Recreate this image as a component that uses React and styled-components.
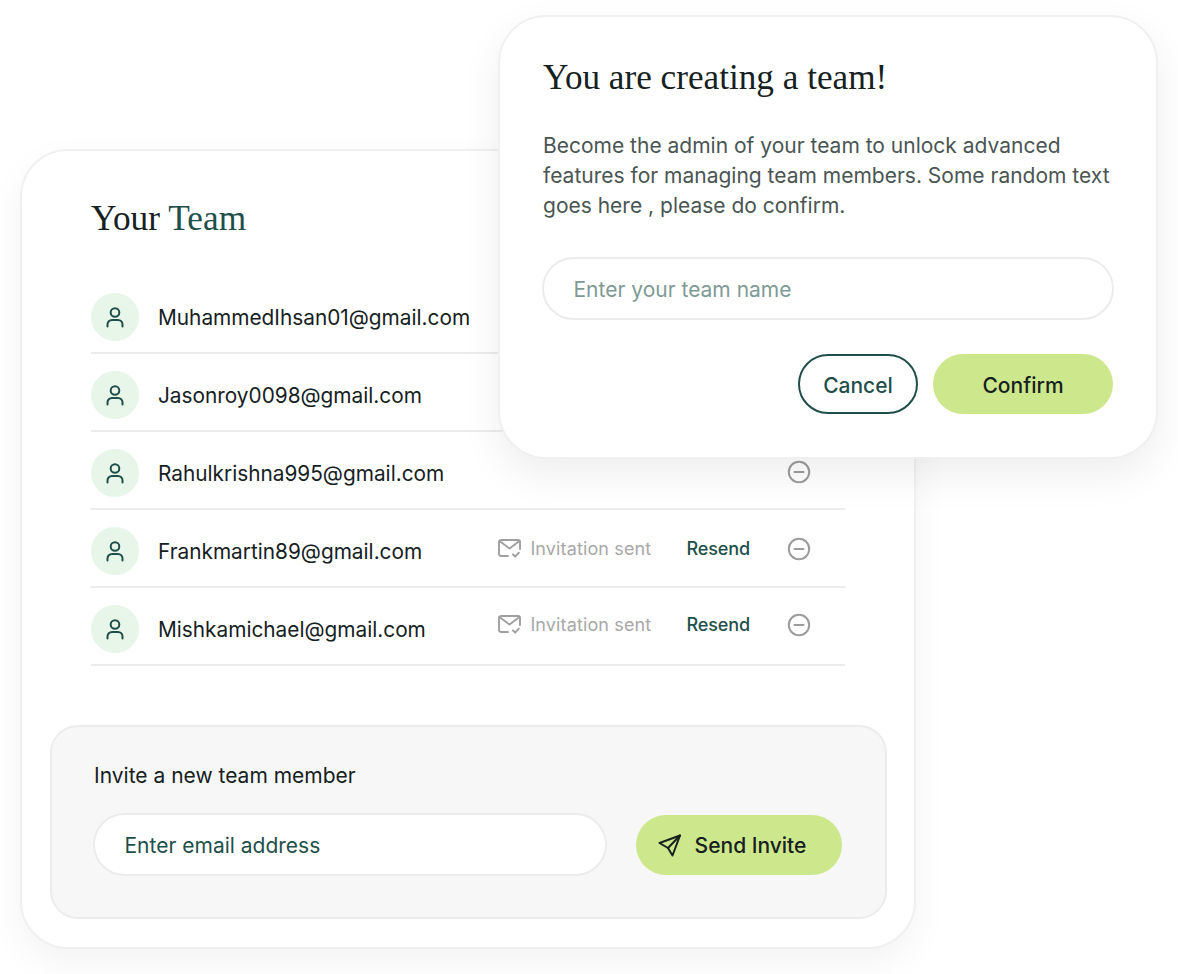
import React from 'react'
import styled, { createGlobalStyle } from 'styled-components'

const dark = '#16211f'
const green = '#1f4f4a'
const lime = '#cde88c'
const line = '#ececec'

const GlobalStyle = createGlobalStyle`
  html, body {
    margin: 0;
    background: #fff;
    font-family: Inter, "Liberation Sans", sans-serif;
  }
  * { box-sizing: border-box; }
`

const Page = styled.div`
  position: relative;
  width: 1178px;
  height: 974px;
  padding: 149px 0 0 20px;
  overflow: hidden;
`

const TeamCard = styled.section`
  width: 896px;
  height: 800px;
  padding: 49px 27px 0 28px;
  background: #fff;
  border: 2px solid #f0f0f0;
  border-radius: 48px;
  box-shadow: 0 14px 36px rgba(0, 0, 0, 0.05);
`

const TeamHeader = styled.h2`
  margin: 0 0 38px 41px;
  font-family: "Liberation Serif", serif;
  font-weight: 400;
  font-size: 35.3px;
  line-height: 38px;
  color: ${dark};
`

const Accent = styled.span`
  color: ${green};
`

const Rows = styled.div`
  margin: 0 42px 0 41px;
`

const Row = styled.div`
  display: flex;
  align-items: center;
  height: 78px;
  padding-top: 6px;
  border-bottom: 2px solid ${line};
`

const Avatar = styled.div`
  flex: none;
  display: flex;
  align-items: center;
  justify-content: center;
  width: 48px;
  height: 48px;
  margin-right: 19px;
  border-radius: 50%;
  background: #e8f5e9;
  color: ${green};
`

const Email = styled.span`
  flex: 1;
  font-size: 20.8px;
  color: ${dark};
`

const Status = styled.span`
  display: flex;
  align-items: center;
  gap: 9px;
  margin: 0 35px ${p => p.$lift * 2}px 0;
  font-size: 18px;
  letter-spacing: 0.13px;
  color: #a8a8a8;
`

const StatusIcon = styled.svg`
  color: #9f9f9f;
`

const Resend = styled.button`
  margin: 0 37px ${p => p.$lift * 2}px 0;
  padding: 0;
  border: 0;
  background: none;
  font: 500 18px Inter, sans-serif;
  letter-spacing: -0.1px;
  color: ${green};
`

const RemoveButton = styled.button`
  display: flex;
  margin: 0 34px ${p => p.$lift * 2}px 0;
  padding: 0;
  border: 0;
  background: none;
  color: #9c9c9c;
`

const InviteBox = styled.div`
  height: 194px;
  margin-top: 59px;
  padding: 37px 43px 0 41px;
  background: #f7f7f7;
  border: 2px solid #ececec;
  border-radius: 28px;
`

const InviteLabel = styled.div`
  margin: 0 0 25px 1px;
  font-size: 21px;
  line-height: 24px;
  color: ${dark};
`

const InviteForm = styled.div`
  display: flex;
  align-items: center;
  justify-content: space-between;
`

const PillInput = styled.input`
  height: 63px;
  width: ${p => p.$width}px;
  padding: 2px 30px 0 29.5px;
  background: #fff;
  border: 2px solid #ececec;
  border-radius: 32px;
  outline: none;
  font: 400 21px Inter, sans-serif;
  &::placeholder {
    color: ${p => p.$placeholder};
    opacity: 1;
  }
`

const LimeButton = styled.button`
  display: flex;
  align-items: center;
  justify-content: center;
  gap: 13px;
  width: ${p => p.$width}px;
  height: 60px;
  padding: 2px ${p => p.$offset || 0}px 0 0;
  border: 0;
  border-radius: 30px;
  background: ${lime};
  font: 500 21px Inter, sans-serif;
  color: ${dark};
`

const Modal = styled.section`
  position: absolute;
  left: 498px;
  top: 15px;
  width: 660px;
  height: 444px;
  padding: 42px 43px 0 42px;
  background: #fff;
  border: 2px solid #f0f0f0;
  border-radius: 48px;
  box-shadow: 0 16px 40px rgba(0, 0, 0, 0.07);
`

const ModalTitle = styled.h1`
  margin: 0 0 34px 1px;
  font-family: "Liberation Serif", serif;
  font-weight: 400;
  font-size: 35.2px;
  line-height: 38px;
  color: ${dark};
`

const ModalText = styled.p`
  margin: 0 0 36px 1px;
  font-size: 21px;
  line-height: 30px;
  color: #4a5553;
`

const ModalActions = styled.div`
  display: flex;
  justify-content: flex-end;
  gap: 15px;
  margin-top: 34px;
`

const CancelButton = styled.button`
  width: 120px;
  height: 60px;
  padding: 2px 0 0;
  background: #fff;
  border: 2px solid ${green};
  border-radius: 30px;
  font: 500 21px Inter, sans-serif;
  color: ${green};
`

const PersonIcon = () => (
  <svg width="24" height="24" viewBox="0 0 24 24" fill="none" stroke="currentColor" strokeWidth="2" strokeLinecap="round">
    <circle cx="12" cy="7.5" r="4.3" />
    <path d="M4.5 21.5v-2a4.5 4.5 0 0 1 4.5-4.5h6a4.5 4.5 0 0 1 4.5 4.5v2" />
  </svg>
)

const MailCheckIcon = () => (
  <StatusIcon width="23" height="19" viewBox="0 0 23 19" fill="none" stroke="currentColor" strokeWidth="1.9" strokeLinecap="round" strokeLinejoin="round">
    <path d="M10 17H3a2 2 0 0 1-2-2V3a2 2 0 0 1 2-2h17a2 2 0 0 1 2 2v7" />
    <path d="M1.5 2l10 7.5L21.5 2" />
    <path d="M15 15.5l2.2 2.2 3.6-4" />
  </StatusIcon>
)

const MinusCircleIcon = () => (
  <svg width="24" height="24" viewBox="0 0 24 24" fill="none" stroke="currentColor" strokeWidth="2" strokeLinecap="round">
    <circle cx="12" cy="12" r="10.2" />
    <path d="M7.5 12h9" />
  </svg>
)

const SendIcon = () => (
  <svg width="24" height="24" viewBox="0 0 24 24" fill="none" stroke="currentColor" strokeWidth="2" strokeLinecap="round" strokeLinejoin="round">
    <path d="M22 1.5L1.5 9l8.5 5 4.5 7.5L22 1.5z" />
    <path d="M10 14L22 1.5" />
  </svg>
)

const members = [
  { email: 'MuhammedIhsan01@gmail.com', lift: 1.5 },
  { email: 'Jasonroy0098@gmail.com', lift: 1.5 },
  { email: 'Rahulkrishna995@gmail.com', lift: 1.5 },
  { email: 'Frankmartin89@gmail.com', lift: 2.5, invited: true },
  { email: 'Mishkamichael@gmail.com', lift: 4.25, invited: true },
]

export default function App() {
  return (
    <Page>
      <GlobalStyle />
      <TeamCard>
        <TeamHeader>Your <Accent>Team</Accent></TeamHeader>
        <Rows>
          {members.map(m => (
            <Row key={m.email}>
              <Avatar><PersonIcon /></Avatar>
              <Email>{m.email}</Email>
              {m.invited && (
                <>
                  <Status $lift={m.lift}><MailCheckIcon />Invitation sent</Status>
                  <Resend $lift={m.lift}>Resend</Resend>
                </>
              )}
              <RemoveButton $lift={m.lift}><MinusCircleIcon /></RemoveButton>
            </Row>
          ))}
        </Rows>
        <InviteBox>
          <InviteLabel>Invite a new team member</InviteLabel>
          <InviteForm>
            <PillInput $width={514} $placeholder={green} placeholder="Enter email address" />
            <LimeButton $width={206} $offset={14}><SendIcon />Send Invite</LimeButton>
          </InviteForm>
        </InviteBox>
      </TeamCard>
      <Modal>
        <ModalTitle>You are creating a team!</ModalTitle>
        <ModalText>
          Become the admin of your team to unlock advanced features for managing team members. Some random text goes here , please do confirm.
        </ModalText>
        <PillInput $width={572} $placeholder="#7e9a95" placeholder="Enter your team name" />
        <ModalActions>
          <CancelButton>Cancel</CancelButton>
          <LimeButton $width={180}>Confirm</LimeButton>
        </ModalActions>
      </Modal>
    </Page>
  )
}
